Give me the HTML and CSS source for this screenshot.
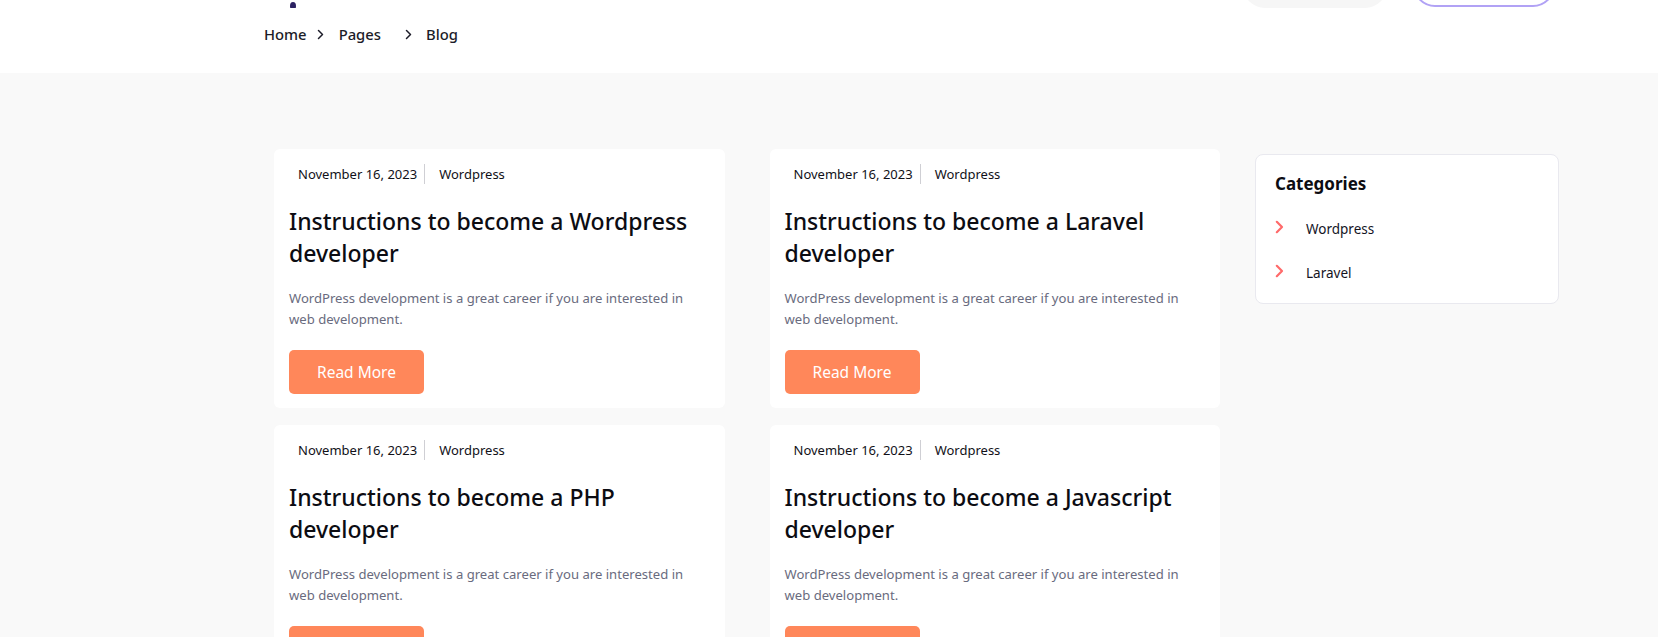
FILE: index.html
```html
<!DOCTYPE html>
<html lang="en">
<head>
<meta charset="utf-8">
<title>Blog</title>
<link rel="stylesheet" href="styles.css">
</head>
<body>
<header class="site-header">
  <div class="wrap">
    <div class="topbar">
      <div class="logo">
        <svg width="40" height="48" viewBox="0 0 40 48"><ellipse cx="29" cy="46" rx="3" ry="4" fill="#2b2162"/></svg>
      </div>
      <div class="top-actions">
        <div class="search-pill"></div>
        <a class="outline-btn" href="#"></a>
      </div>
    </div>
    <nav class="breadcrumb">
      <a class="crumb" href="#">Home</a>
      <svg class="crumb-sep sep-1" width="7" height="11" viewBox="0 0 7 11"><path d="M1.5 1.5 L5.5 5.5 L1.5 9.5" fill="none" stroke="#1c1c28" stroke-width="1.5" stroke-linecap="round" stroke-linejoin="round"/></svg>
      <a class="crumb crumb-pages" href="#">Pages</a>
      <svg class="crumb-sep sep-2" width="7" height="11" viewBox="0 0 7 11"><path d="M1.5 1.5 L5.5 5.5 L1.5 9.5" fill="none" stroke="#1c1c28" stroke-width="1.5" stroke-linecap="round" stroke-linejoin="round"/></svg>
      <span class="crumb current">Blog</span>
    </nav>
  </div>
</header>

<main class="blog-area">
  <div class="wrap blog-layout">
    <section class="posts">
      <article class="post-card">
        <div class="post-meta"><span class="post-date">November 16, 2023</span><span class="post-cat">Wordpress</span></div>
        <h2 class="post-title">Instructions to become a Wordpress developer</h2>
        <p class="post-excerpt">WordPress development is a great career if you are interested in web development.</p>
        <a class="read-more" href="#">Read More</a>
      </article>
      <article class="post-card">
        <div class="post-meta"><span class="post-date">November 16, 2023</span><span class="post-cat">Wordpress</span></div>
        <h2 class="post-title">Instructions to become a Laravel developer</h2>
        <p class="post-excerpt">WordPress development is a great career if you are interested in web development.</p>
        <a class="read-more" href="#">Read More</a>
      </article>
      <article class="post-card">
        <div class="post-meta"><span class="post-date">November 16, 2023</span><span class="post-cat">Wordpress</span></div>
        <h2 class="post-title">Instructions to become a PHP developer</h2>
        <p class="post-excerpt">WordPress development is a great career if you are interested in web development.</p>
        <a class="read-more" href="#">Read More</a>
      </article>
      <article class="post-card">
        <div class="post-meta"><span class="post-date">November 16, 2023</span><span class="post-cat">Wordpress</span></div>
        <h2 class="post-title">Instructions to become a Javascript developer</h2>
        <p class="post-excerpt">WordPress development is a great career if you are interested in web development.</p>
        <a class="read-more" href="#">Read More</a>
      </article>
    </section>

    <aside class="sidebar">
      <div class="widget">
        <h3 class="widget-title">Categories</h3>
        <ul class="cat-list">
          <li class="cat-item">
            <svg class="cat-icon" width="9" height="14" viewBox="0 0 9 14"><path d="M1.8 1.8 L7 7 L1.8 12.2" fill="none" stroke="#ff6a6a" stroke-width="2.2" stroke-linecap="round" stroke-linejoin="round"/></svg>
            <a href="#">Wordpress</a>
          </li>
          <li class="cat-item">
            <svg class="cat-icon" width="9" height="14" viewBox="0 0 9 14"><path d="M1.8 1.8 L7 7 L1.8 12.2" fill="none" stroke="#ff6a6a" stroke-width="2.2" stroke-linecap="round" stroke-linejoin="round"/></svg>
            <a href="#">Laravel</a>
          </li>
        </ul>
      </div>
    </aside>
  </div>
</main>
</body>
</html>
```

FILE: styles.css
```css
* { box-sizing: border-box; }

html, body {
  margin: 0;
  padding: 0;
}

body {
  font-family: "Noto Sans", "Open Sans", sans-serif;
  color: #14141f;
  background: #f9f9f9;
}

a { color: inherit; text-decoration: none; }

.wrap {
  width: 1295px;
  margin-left: 264px;
}

/* header */
.site-header {
  background: #ffffff;
  height: 73px;
  overflow: hidden;
}

.topbar {
  height: 48px;
  margin-top: -40px;
  display: flex;
  justify-content: space-between;
  align-items: flex-end;
}

.logo {
  height: 48px;
}

.logo svg { display: block; }

.top-actions {
  display: flex;
  align-items: flex-end;
  gap: 26px;
  margin-right: 4px;
}

.search-pill {
  width: 144px;
  height: 48px;
  background: #f6f6f6;
  border-radius: 22px;
}

.outline-btn {
  display: block;
  width: 142px;
  height: 47px;
  border: 2.5px solid #b1a2f5;
  border-radius: 22px;
  margin-bottom: 1px;
}

.breadcrumb {
  display: flex;
  align-items: center;
  height: 20px;
  margin-top: 16px;
  font-size: 14.8px;
  font-weight: 500;
  color: #1c1c28;
}

.crumb-sep { display: block; }
.sep-1 { margin-left: 10px; margin-right: 15px; }
.sep-2 { margin-left: 24px; margin-right: 14px; }

/* main */
.blog-area {
  padding-top: 76px;
  padding-bottom: 60px;
}

.blog-layout {
  display: grid;
  grid-template-columns: 1fr 304px;
  column-gap: 35px;
  padding-left: 10px;
  align-items: start;
}

.posts {
  display: grid;
  grid-template-columns: 1fr 1fr;
  column-gap: 45px;
  row-gap: 17px;
}

.post-card {
  background: #ffffff;
  border-radius: 6px;
  padding: 15px 15px 14px 15px;
}

.post-meta {
  display: flex;
  align-items: center;
  height: 20px;
  padding-left: 9px;
  font-size: 13px;
  color: #111118;
}

.post-date {
  padding-right: 7px;
  line-height: 20px;
  border-right: 1px solid #cfcfd4;
}

.post-cat {
  padding-left: 14px;
  line-height: 20px;
}

.post-title {
  margin: 22px 0 0 0;
  font-size: 23px;
  line-height: 31.5px;
  font-weight: 500;
  color: #0c0c12;
}

.post-excerpt {
  margin: 19px 0 0 0;
  font-size: 13.1px;
  line-height: 21px;
  color: #696b7e;
}

.read-more {
  display: flex;
  align-items: center;
  justify-content: center;
  width: 135px;
  height: 44px;
  margin-top: 20px;
  background: #ff875a;
  color: #ffffff;
  border-radius: 5px;
  font-size: 15.5px;
}

/* sidebar */
.sidebar {
  margin-top: 5px;
}

.widget {
  background: #ffffff;
  border: 1px solid #e9e9ef;
  border-radius: 8px;
  padding: 17px 19px 14px 19px;
  height: 150px;
}

.widget-title {
  margin: 0;
  font-size: 17px;
  line-height: 24px;
  font-weight: 700;
  color: #0c0c12;
}

.cat-list {
  list-style: none;
  margin: 22px 0 0 0;
  padding: 0;
  display: flex;
  flex-direction: column;
  gap: 22px;
}

.cat-item {
  display: flex;
  align-items: center;
  height: 22px;
  font-size: 13.5px;
  color: #14141f;
}

.cat-icon {
  display: block;
  margin-right: 22px;
  margin-top: -4px;
}
```
